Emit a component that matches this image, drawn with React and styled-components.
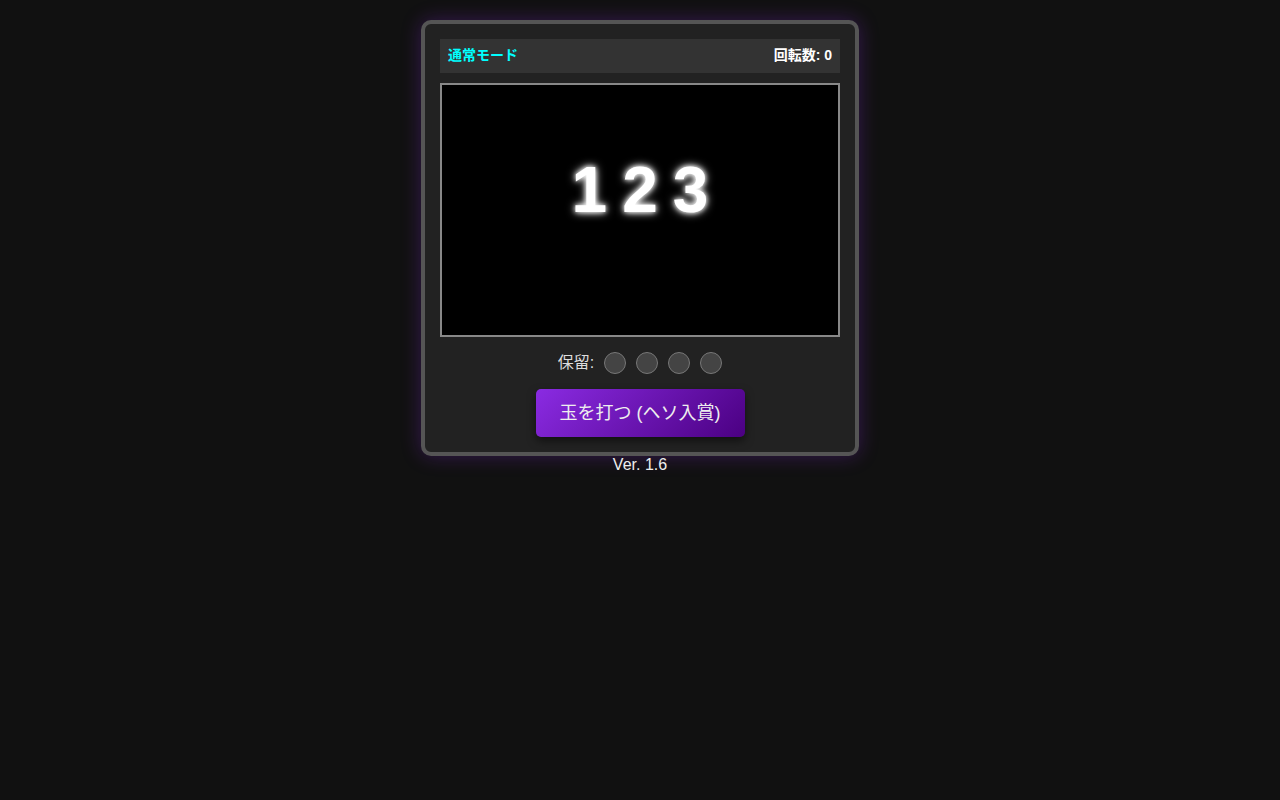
import React from "react";
import styled, { createGlobalStyle } from "styled-components";

const GlobalStyle = createGlobalStyle`
  body {
    margin: 0;
    padding: 20px 0;
    background: #111;
    color: #eee;
    font-family: "Liberation Sans", Arial, "Noto Sans CJK JP", sans-serif;
  }
`;

const Page = styled.div`
  display: flex;
  flex-direction: column;
  align-items: center;
`;

const Machine = styled.div`
  width: 400px;
  padding: 15px;
  background: #222;
  border: 4px solid #555;
  border-radius: 10px;
  box-shadow: 0 0 20px rgba(138, 43, 226, 0.3);
  display: flex;
  flex-direction: column;
  align-items: center;
`;

const InfoBar = styled.div`
  align-self: stretch;
  box-sizing: border-box;
  height: 34px;
  padding: 0 8px 3px;
  background: #333;
  display: flex;
  align-items: center;
  justify-content: space-between;
  font-size: 14px;
  line-height: 16px;
  font-weight: bold;
`;

const Mode = styled.span`
  color: #00ffff;
`;

const Count = styled.span`
  color: #fff;
`;

const Display = styled.div`
  align-self: stretch;
  box-sizing: border-box;
  height: 254px;
  margin-top: 10px;
  background: #000;
  border: 2px solid #888;
  display: flex;
  justify-content: center;
  padding-top: 68px;
`;

const Reels = styled.div`
  display: flex;
  gap: 15px;
  height: 74px;
  align-items: center;
`;

const Reel = styled.span`
  font-size: 64px;
  font-weight: bold;
  color: #fff;
  text-shadow: 0 0 10px #fff, 0 0 5px #fff;
`;

const HoldRow = styled.div`
  display: flex;
  align-items: center;
  gap: 10px;
  height: 22px;
  margin-top: 15px;
  font-size: 16px;
  line-height: 18px;
  color: #ddd;
`;

const Lamp = styled.span`
  width: 20px;
  height: 20px;
  border-radius: 50%;
  background: ${(p) => (p.on ? "#ffcc00" : "#444")};
  border: 1px solid #777;
`;

const Button = styled.button`
  margin-top: 15px;
  height: 48px;
  padding: 0 24px;
  font-family: inherit;
  font-size: 18px;
  line-height: 20px;
  color: #eee;
  background: linear-gradient(135deg, #8a2be2, #4b0082);
  border: none;
  border-radius: 5px;
  box-shadow: 0 4px 8px rgba(0, 0, 0, 0.5);
  cursor: pointer;
`;

const Version = styled.div`
  margin-top: 0;
  font-size: 16px;
  line-height: 18px;
  color: #eee;
`;

export default function App() {
  const holds = [false, false, false, false];
  return (
    <>
      <GlobalStyle />
      <Page>
        <Machine>
          <InfoBar>
            <Mode>通常モード</Mode>
            <Count>回転数: 0</Count>
          </InfoBar>
          <Display>
            <Reels>
              <Reel>1</Reel>
              <Reel>2</Reel>
              <Reel>3</Reel>
            </Reels>
          </Display>
          <HoldRow>
            保留:
            {holds.map((h, i) => (
              <Lamp key={i} on={h ? 1 : 0} />
            ))}
          </HoldRow>
          <Button>玉を打つ (ヘソ入賞)</Button>
        </Machine>
        <Version>Ver. 1.6</Version>
      </Page>
    </>
  );
}
